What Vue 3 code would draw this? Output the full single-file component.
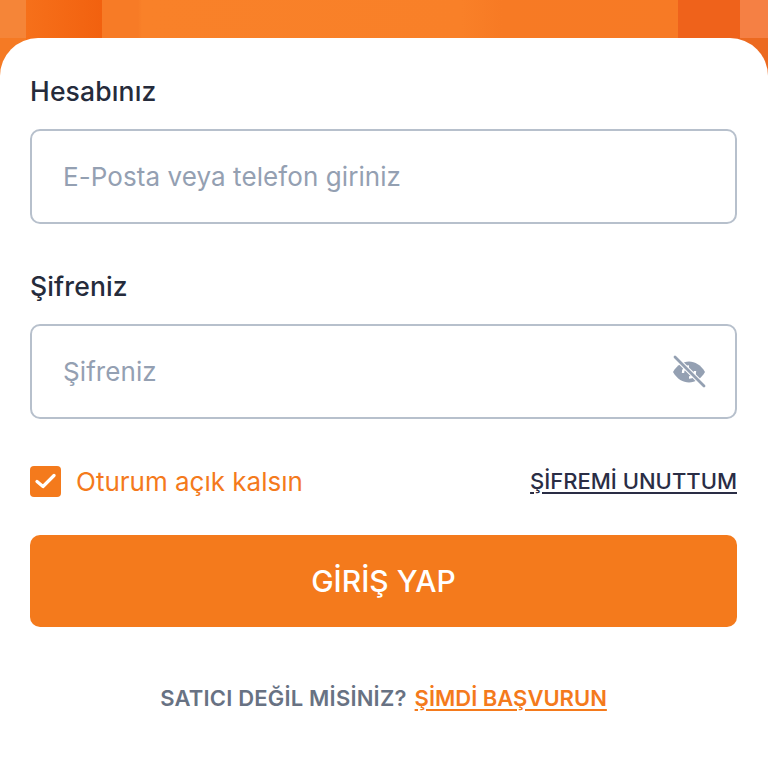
<template>
  <div class="page">
    <div class="hero">
      <div class="band band-edge"></div>
      <div class="band band-dark"></div>
      <div class="band band-main"></div>
      <div class="band band-dark2"></div>
      <div class="band band-edge2"></div>
    </div>

    <div class="card">
      <label class="field-label first">Hesabınız</label>
      <div class="input-box">
        <input class="text-input" type="text" placeholder="E-Posta veya telefon giriniz" />
      </div>

      <label class="field-label second">Şifreniz</label>
      <div class="input-box">
        <input class="text-input" type="password" placeholder="Şifreniz" />
        <svg class="eye" width="34" height="34" viewBox="0 0 34 34">
          <path d="M1 17 C5 10 11 6.5 17 6.5 C23 6.5 29 10 33 17 C29 24 23 27.5 17 27.5 C11 27.5 5 24 1 17 Z" fill="#94a0b2" />
          <path d="M11 18 A6 6 0 0 1 17 11.5" fill="none" stroke="#fff" stroke-width="2.4" />
          <path d="M23 16 A6 6 0 0 1 17 22.5" fill="none" stroke="#fff" stroke-width="2.4" />
          <path d="M3 2 L32 31" stroke="#fff" stroke-width="5" />
          <path d="M3 2 L32 31" stroke="#94a0b2" stroke-width="2.8" stroke-linecap="round" />
        </svg>
      </div>

      <div class="options">
        <div class="remember">
          <span class="check">
            <svg width="21" height="16" viewBox="0 0 21 16">
              <path d="M2 8.5 L8 13.5 L19 2.5" fill="none" stroke="#fff" stroke-width="3.2" stroke-linecap="round" stroke-linejoin="round" />
            </svg>
          </span>
          <span class="remember-text">Oturum açık kalsın</span>
        </div>
        <a class="forgot">ŞİFREMİ UNUTTUM</a>
      </div>

      <button class="submit">GİRİŞ YAP</button>

      <div class="footer">
        <span class="footer-text">SATICI DEĞİL MİSİNİZ?</span>
        <a class="footer-link">ŞİMDİ BAŞVURUN</a>
      </div>
    </div>
  </div>
</template>

<script setup>
</script>

<style>
html, body {
  background: #fff;
}
</style>

<style scoped>
.page {
  width: 768px;
  height: 768px;
  overflow: hidden;
  font-family: Inter, "Noto Sans", sans-serif;
  position: relative;
  background: #fff;
}

.hero {
  height: 90px;
  display: flex;
  margin-bottom: -52px;
}

.band-edge {
  width: 26px;
  background: linear-gradient(180deg, #f58538 0 38px, #f57a24 38px);
}

.band-dark {
  width: 76px;
  background: linear-gradient(90deg, #f6701a, #f2610f);
}

.band-main {
  flex: 1;
  background: linear-gradient(90deg, #f77b26 0, #f77b26 36px, #f98129 40px, #f98028 360px, #f77a24 400px, #f77a25 576px);
}

.band-dark2 {
  width: 62px;
  background: #ef621b;
}

.band-edge2 {
  width: 28px;
  background: linear-gradient(180deg, #f58044 0 38px, #ec6a20 38px);
}

.card {
  position: relative;
  background: #fff;
  border-radius: 38px 38px 0 0;
  padding: 0 31px 0 30px;
  height: 730px;
}

.field-label {
  display: block;
  font-size: 26.5px;
  line-height: 32px;
  font-weight: 500;
  letter-spacing: 0.15px;
  color: #252b3b;
}

.first {
  padding-top: 37px;
  margin-bottom: 22px;
}

.second {
  margin-top: 46px;
  margin-bottom: 22px;
}

.input-box {
  height: 95px;
  box-sizing: border-box;
  border: 2px solid #b7c0cc;
  border-radius: 10px;
  display: flex;
  align-items: center;
  padding: 0 29px 0 31px;
}

.text-input {
  flex: 1;
  min-width: 0;
  border: 0;
  outline: 0;
  padding: 0;
  background: transparent;
  font-family: inherit;
  font-size: 26px;
  letter-spacing: 0.08px;
  color: #252b3b;
}

.text-input::placeholder {
  color: #94a0b2;
  opacity: 1;
}

.eye {
  flex: none;
}

.options {
  margin-top: 46px;
  height: 32px;
  display: flex;
  align-items: center;
  justify-content: space-between;
}

.remember {
  display: flex;
  align-items: center;
  gap: 15px;
}

.check {
  width: 31px;
  height: 31px;
  border-radius: 4px;
  background: #f47a1c;
  display: flex;
  align-items: center;
  justify-content: center;
}

.remember-text {
  font-size: 26px;
  color: #f47a1c;
}

.forgot {
  font-size: 22px;
  font-weight: 500;
  color: #2a2d45;
  text-decoration: underline;
  text-decoration-thickness: 2px;
  text-underline-offset: 3px;
}

.submit {
  display: block;
  width: 100%;
  height: 92px;
  margin-top: 38px;
  border: 0;
  border-radius: 10px;
  background: #f47a1c;
  color: #fff;
  font-family: inherit;
  font-size: 30px;
  font-weight: 500;
}

.footer {
  margin-top: 57px;
  display: flex;
  justify-content: center;
  gap: 8px;
  font-size: 22px;
  line-height: 28px;
  font-weight: 600;
}

.footer-text {
  color: #687283;
  letter-spacing: 0.2px;
}

.footer-link {
  color: #f47a1c;
  text-decoration: underline;
  text-decoration-thickness: 2px;
  text-underline-offset: 3px;
}
</style>
